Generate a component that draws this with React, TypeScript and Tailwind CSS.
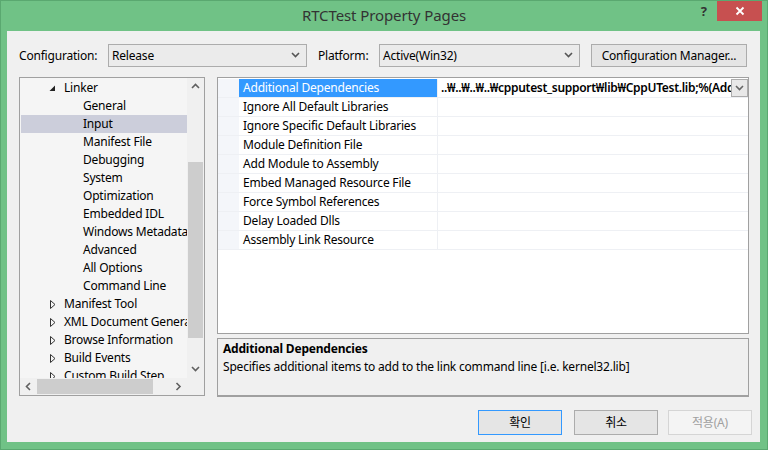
import React from "react";

const FONT = { fontFamily: '"Noto Sans", "Noto Sans CJK KR", sans-serif' };

function Chevron({ dir = "down", color = "#555" }: { dir?: "down" | "up" | "left" | "right"; color?: string }) {
  const d =
    dir === "down"
      ? "M1 2 L4.5 5.5 L8 2"
      : dir === "up"
      ? "M1 6 L4.5 2.5 L8 6"
      : dir === "left"
      ? "M6 1 L2.5 4.5 L6 8"
      : "M2.5 1 L6 4.5 L2.5 8";
  return (
    <svg width="9" height="9" viewBox="0 0 9 9">
      <path d={d} fill="none" stroke={color} strokeWidth="1.6" />
    </svg>
  );
}

function Select({ value, width }: { value: string; width: string }) {
  return (
    <div className={`${width} h-[23px] flex items-center border border-[#acacac] bg-[#ebebeb] pl-[3px] pr-[6px]`}>
      <span className="flex-1 text-black">{value}</span>
      <Chevron />
    </div>
  );
}

type TreeItem = { label: string; level: 0 | 1; kind?: "open" | "closed"; selected?: boolean };

const treeItems: TreeItem[] = [
  { label: "Linker", level: 0, kind: "open" },
  { label: "General", level: 1 },
  { label: "Input", level: 1, selected: true },
  { label: "Manifest File", level: 1 },
  { label: "Debugging", level: 1 },
  { label: "System", level: 1 },
  { label: "Optimization", level: 1 },
  { label: "Embedded IDL", level: 1 },
  { label: "Windows Metadata", level: 1 },
  { label: "Advanced", level: 1 },
  { label: "All Options", level: 1 },
  { label: "Command Line", level: 1 },
  { label: "Manifest Tool", level: 0, kind: "closed" },
  { label: "XML Document Generator", level: 0, kind: "closed" },
  { label: "Browse Information", level: 0, kind: "closed" },
  { label: "Build Events", level: 0, kind: "closed" },
  { label: "Custom Build Step", level: 0, kind: "closed" },
];

const props = [
  "Additional Dependencies",
  "Ignore All Default Libraries",
  "Ignore Specific Default Libraries",
  "Module Definition File",
  "Add Module to Assembly",
  "Embed Managed Resource File",
  "Force Symbol References",
  "Delay Loaded Dlls",
  "Assembly Link Resource",
];

export default function App() {
  return (
    <div className="w-[768px] h-[450px] bg-[#70c286] flex flex-col border border-[#5aa870]" style={FONT}>
      {/* Title bar */}
      <div className="h-[30px] flex items-start shrink-0">
        <div className="flex-1" />
        <div className="pt-[3px] text-[15px] text-[#333] whitespace-nowrap tracking-[-0.1px]">RTCTest Property Pages</div>
        <div className="flex-1 flex justify-end">
          <div className="pt-[1px] pr-[10px] text-[13px] font-bold text-[#333]">?</div>
          <div className="w-[45px] h-[20px] bg-[#c75050] flex items-center justify-center mr-[5px]">
            <svg width="10" height="10" viewBox="0 0 10 10">
              <path d="M1.5 1.5 L8.5 8.5 M8.5 1.5 L1.5 8.5" stroke="white" strokeWidth="1.8" />
            </svg>
          </div>
        </div>
      </div>

      {/* Client */}
      <div className="ml-[6px] mr-[7px] mb-[7px] flex-1 bg-[#f0f0f0] flex flex-col pl-[12px] pt-[13px] text-[12px] tracking-[-0.2px] text-black">
        {/* Config row */}
        <div className="h-[23px] flex items-center pr-[11px]">
          <div className="w-[89px]">Configuration:</div>
          <Select value="Release" width="w-[199px]" />
          <div className="w-[61px] ml-[11px]">Platform:</div>
          <Select value="Active(Win32)" width="w-[201px]" />
          <div className="ml-[11px] w-[156px] h-[23px] border border-[#acacac] bg-[#e5e5e5] flex items-center justify-center">
            Configuration Manager...
          </div>
        </div>

        {/* Main */}
        <div className="mt-[10px] h-[320px] flex pr-[11px]">
          {/* Tree */}
          <div className="w-[186px] h-[319px] border border-[#a0a0a0] bg-[#f5f5f5] flex flex-col">
            <div className="flex-1 flex overflow-hidden">
              <div className="flex-1 overflow-hidden pt-[1px] pl-[1px]">
                {treeItems.map((it) => (
                  <div
                    key={it.label}
                    className={`h-[18px] flex items-center whitespace-nowrap overflow-hidden ${it.selected ? "bg-[#cccedb]" : ""}`}
                  >
                    {it.level === 0 ? (
                      <>
                        <div className="w-[43px] shrink-0 flex justify-end pr-[8px]">
                          {it.kind === "open" ? (
                            <svg width="7" height="7" viewBox="0 0 7 7">
                              <path d="M6 0.5 L6 6 L0.5 6 Z" fill="#222" />
                            </svg>
                          ) : (
                            <svg width="6" height="9" viewBox="0 0 6 9">
                              <path d="M0.5 0.5 L5 4.5 L0.5 8.5 Z" fill="none" stroke="#333" strokeWidth="1" />
                            </svg>
                          )}
                        </div>
                        <span className="shrink-0">{it.label}</span>
                      </>
                    ) : (
                      <span className="pl-[62px] shrink-0">{it.label}</span>
                    )}
                  </div>
                ))}
              </div>
              {/* vertical scrollbar */}
              <div className="w-[17px] shrink-0 bg-[#f0f0f0] flex flex-col items-center">
                <div className="h-[17px] flex items-center justify-center">
                  <Chevron dir="up" color="#606060" />
                </div>
                <div className="flex-1 w-full flex flex-col px-[1px]">
                  <div className="h-[67px]" />
                  <div className="h-[176px] bg-[#cdcdcd]" />
                </div>
                <div className="h-[17px] flex items-center justify-center">
                  <Chevron dir="down" color="#606060" />
                </div>
              </div>
            </div>
            {/* horizontal scrollbar */}
            <div className="h-[17px] flex bg-[#f0f0f0]">
              <div className="flex-1 flex items-center">
                <div className="w-[17px] flex justify-center">
                  <Chevron dir="left" color="#606060" />
                </div>
                <div className="w-[116px] h-[15px] bg-[#cdcdcd]" />
                <div className="flex-1" />
                <div className="w-[17px] flex justify-center">
                  <Chevron dir="right" color="#606060" />
                </div>
              </div>
              <div className="w-[17px] bg-[#f0f0f0]" />
            </div>
          </div>

          {/* Right side */}
          <div className="ml-[12px] w-[532px] flex flex-col">
            <div className="h-[257px] border border-[#a0a0a0] bg-white pt-[1px]">
              {props.map((p, i) => (
                <div key={p} className="h-[19px] flex border-b border-[#eef0f4]">
                  <div className="w-[21px] bg-[#f4f6fa]" />
                  <div
                    className={`w-[199px] pl-[4px] flex items-center whitespace-nowrap border-r border-[#eef0f4] ${
                      i === 0 ? "bg-[#3399ff] text-white" : ""
                    }`}
                  >
                    {p}
                  </div>
                  <div className="flex-1 flex items-center overflow-hidden">
                    {i === 0 && (
                      <>
                        <div className="flex-1 overflow-hidden whitespace-nowrap pl-[3px] font-semibold tracking-[-0.3px]">
                          ..₩..₩..₩..₩cpputest_support₩lib₩CppUTest.lib;%(AdditionalDependencies)
                        </div>
                        <div className="w-[17px] h-[18px] border border-[#acacac] bg-[#e8e8e8] flex items-center justify-center shrink-0">
                          <Chevron color="#666" />
                        </div>
                      </>
                    )}
                  </div>
                </div>
              ))}
            </div>
            <div className="mt-[4px] h-[59px] border border-[#a0a0a0] border-b-2 bg-[#f0f0f0] px-[5px] pt-[1px]">
              <div className="h-[18px] font-bold leading-[18px]">Additional Dependencies</div>
              <div className="h-[18px] leading-[18px]">
                Specifies additional items to add to the link command line [i.e. kernel32.lib]
              </div>
            </div>
          </div>
        </div>

        {/* Buttons */}
        <div className="mt-[13px] flex justify-end pr-[8px] gap-[10px]">
          <div className="w-[84px] h-[25px] mr-[2px] border border-[#3399ff] bg-[#e5e5e5] flex items-center justify-center">
            확인
          </div>
          <div className="w-[84px] h-[25px] border border-[#acacac] bg-[#e5e5e5] flex items-center justify-center">
            취소
          </div>
          <div className="w-[84px] h-[25px] border border-[#d5d5d5] bg-[#f4f4f4] text-[#a0a0a0] flex items-center justify-center">
            적용(A)
          </div>
        </div>
      </div>
    </div>
  );
}
